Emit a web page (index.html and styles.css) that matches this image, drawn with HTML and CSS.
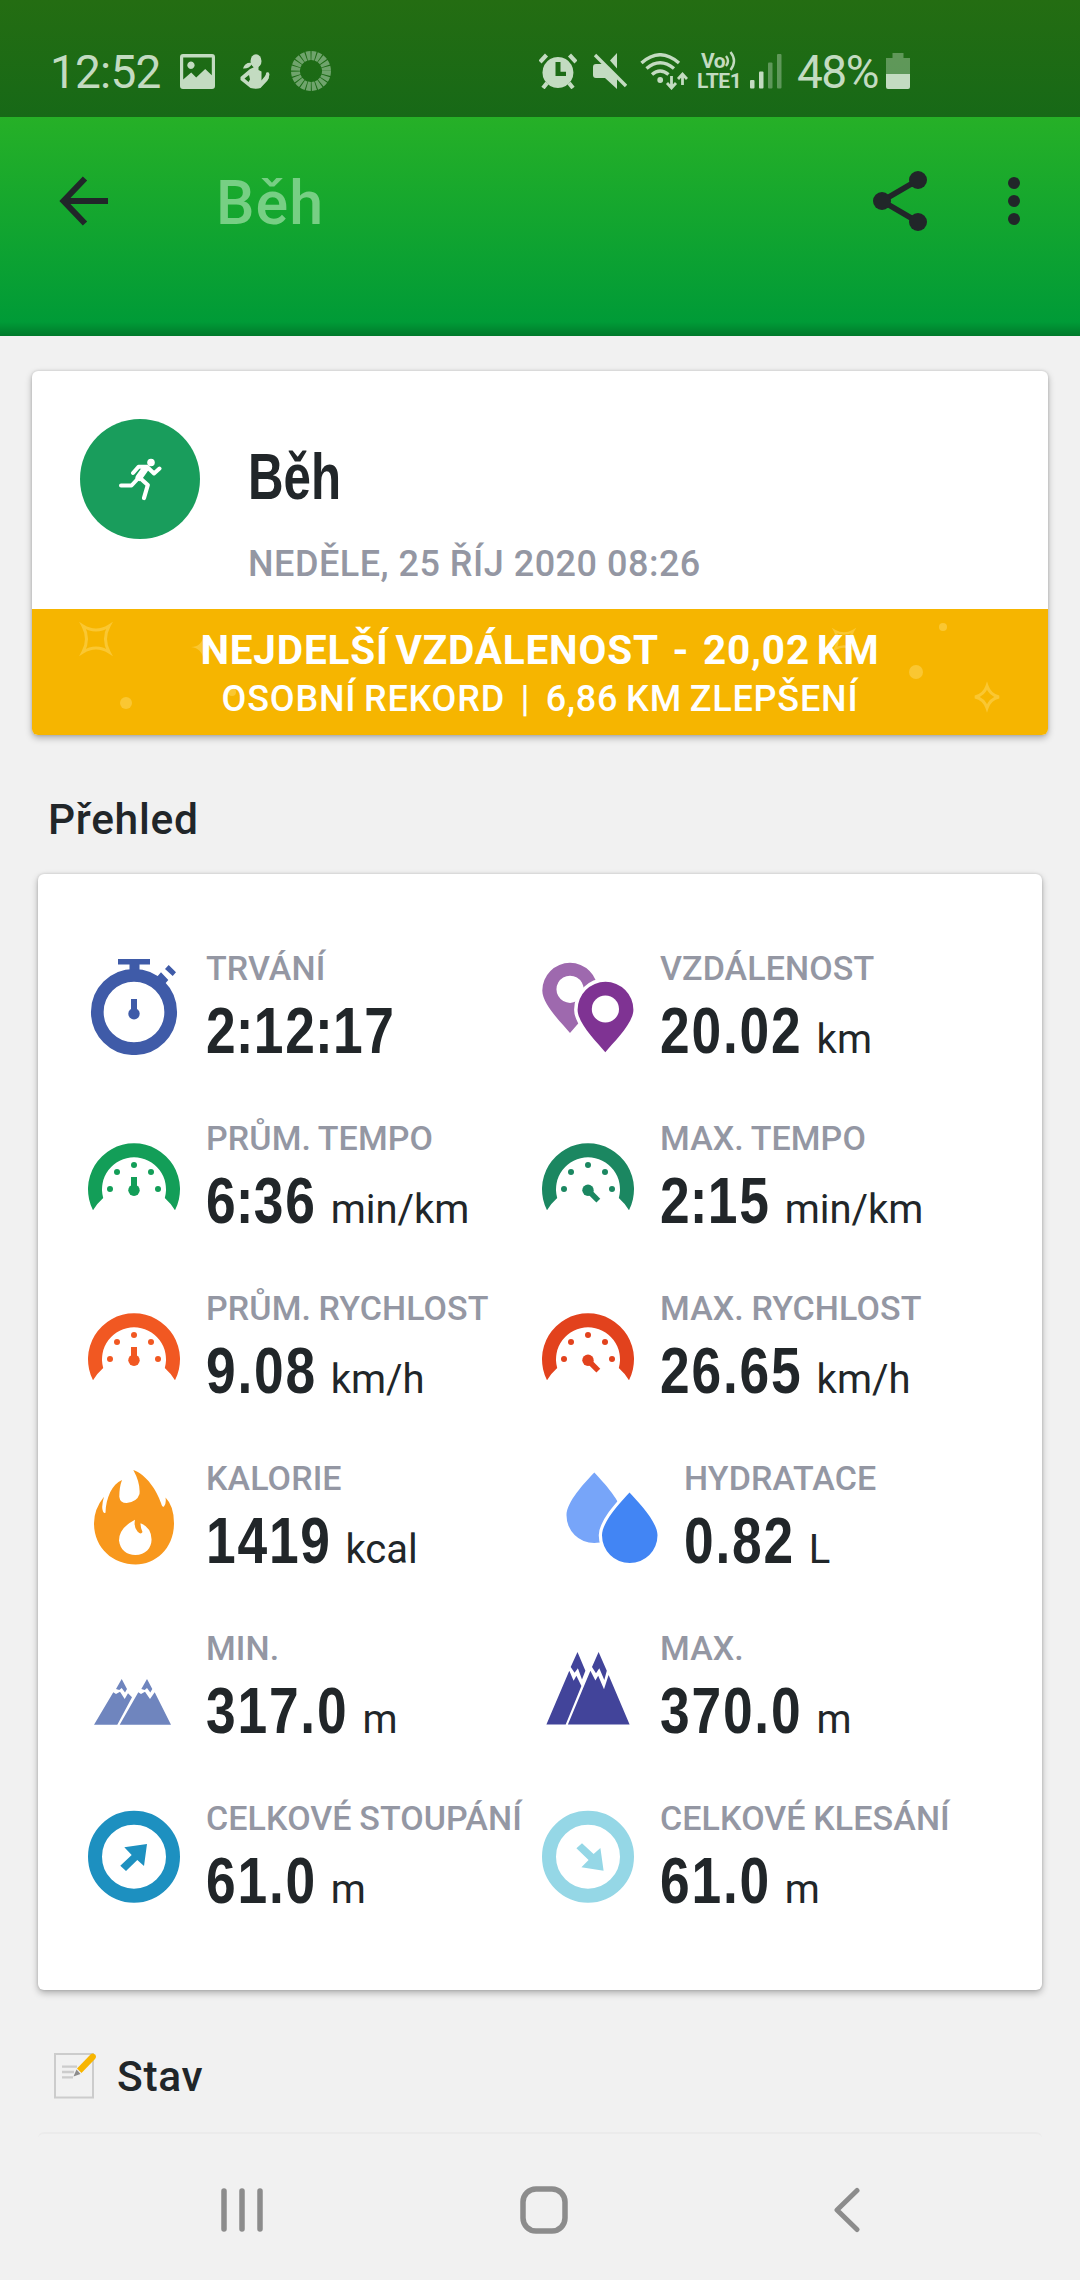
FILE: index.html
```html
<!DOCTYPE html>
<html lang="cs">
<head>
    <meta charset="UTF-8">
    <meta name="viewport" content="width=device-width, initial-scale=1.0">
    <title>Běh</title>
    <link rel="stylesheet" href="styles.css">
</head>
<body>

    <div class="status-bar">
        <span class="clock">12:52</span>
        <svg class="st-photo" width="35" height="35" viewBox="0 0 35 35"><path fill-rule="evenodd" d="M3 0h29a3 3 0 0 1 3 3v29a3 3 0 0 1-3 3H3a3 3 0 0 1-3-3V3a3 3 0 0 1 3-3zM3.200 3.500v22l8-7 5 5 9-8.500 6.600 6.300V3.500zM11 7.500a3.700 3.700 0 1 1-.1 0z"/></svg>
        <svg class="st-person" width="30" height="35" viewBox="0 0 30 35">
            <ellipse cx="16" cy="7" rx="5.500" ry="6.800"/>
            <path d="M12 9 Q5 8 3 14.500 Q9 15 12 10zM13.500 12h5v4l3 1.500v9l5.500-7 2.500 1-2 6-7 7.500q-4 1.500-10 0L.5 26v-3l9.500-8 3.500-1.500zM9 21l-4.500 3.500 4 3.500 1.500-2.500z" fill-rule="evenodd"/>
            <path d="M20 31l7-7 .6-4" fill="none" stroke="#c3dbc1" stroke-width="3.400" stroke-linecap="round"/>
        </svg>
        <svg class="st-ring" width="40" height="40" viewBox="0 0 40 40"><circle cx="20" cy="20" r="15.500" fill="none" stroke="#6fa46c" stroke-width="9" stroke-dasharray="3.970 .9"/></svg>
        <div class="status-right">
            <svg width="38" height="36" viewBox="0 0 38 36">
                <path fill-rule="evenodd" d="M19 4a15.500 15.500 0 1 1-.1 0zM16.500 9v14h10.500v-4.200h-5.500V9z"/>
                <path d="M1 9l6.500-7M37 9l-6.500-7M4 35l4-5M34 35l-4-5" fill="none" stroke="#c3dbc1" stroke-width="4.200"/>
            </svg>
            <svg class="st-mute" width="34" height="36" viewBox="0 0 34 36">
                <path d="M3 11h7l14 14v11L12 25H3q-3 0-3-3v-8q0-3 3-3zM24 0v15.500l-7-8z"/>
                <path d="M2 2l31 31" fill="none" stroke="#c3dbc1" stroke-width="3.400"/>
            </svg>
            <svg class="st-wifi" width="48" height="37" viewBox="0 0 48 37">
                <path d="M1.500 10Q20-6.500 39 10M6.500 15.500Q20 4 34 15.500M12 21.500Q20 14.500 28.500 21.500" fill="none" stroke="#c3dbc1" stroke-width="3.400"/>
                <circle cx="20.200" cy="27" r="2.900"/>
                <path d="M31.500 23v11M27 30l4.500 5 4.500-5M42.500 32V22M38 26l4.500-5 4.500 5" fill="none" stroke="#c3dbc1" stroke-width="2.800"/>
            </svg>
            <div class="volte"><span>Vo<svg width="11" height="20" viewBox="0 0 11 20"><path d="M1 5q4 5 0 10M5.500 1q7 9 0 18" fill="none" stroke="#c3dbc1" stroke-width="2.400"/></svg></span><span>LTE1</span></div>
            <svg class="st-signal" width="32" height="35" viewBox="0 0 32 35">
                <rect x="0" y="26" width="4.500" height="8.500" rx="1"/><rect x="9" y="17.500" width="4.500" height="17" rx="1"/>
                <g opacity=".4"><rect x="18" y="8.500" width="4.500" height="26" rx="1"/><rect x="27" y="0" width="4.500" height="34.500" rx="1"/></g>
            </svg>
            <span class="percent">48%</span>
            <svg class="st-battery" width="24" height="36" viewBox="0 0 24 36"><path opacity=".4" d="M6.500 0h11v5H24v16H0V5h6.500z"/><path d="M0 21h24v13q0 2-2 2H2q-2 0-2-2z"/></svg>
        </div>
    </div>

    <header class="app-bar">
        <svg class="back" width="50" height="50" viewBox="0 0 50 50"><path d="M26 2.500L4.500 25 26 47.500M4 25h45" fill="none" stroke="#212629" stroke-width="6"/></svg>
        <span class="app-title">Běh</span>
        <svg class="share" width="56" height="62" viewBox="0 0 56 62"><path d="M46 10L10 31l36 21" fill="none" stroke="#212629" stroke-width="5.500"/><circle cx="46" cy="10" r="9"/><circle cx="10" cy="31" r="9"/><circle cx="46" cy="52" r="9"/></svg>
        <svg class="more" width="12" height="50" viewBox="0 0 12 50"><circle cx="6" cy="7" r="6"/><circle cx="6" cy="25" r="6"/><circle cx="6" cy="43" r="6"/></svg>
    </header>

    <main>
        <section class="card summary">
            <div class="summary-top">
                <div class="sport">
                    <svg width="44" height="43" viewBox="0 0 44 43" fill="none" stroke="#fff" stroke-width="4" stroke-linecap="round" stroke-linejoin="round">
                        <circle cx="33" cy="4.500" r="3.800" fill="#fff" stroke="none"/>
                        <path d="M15 15L20.500 8.700H29L36 15.500 41.500 10.500"/>
                        <path d="M27 11L21 19.500" stroke-width="7"/>
                        <path d="M20.500 20L13.500 27.500H3"/>
                        <path d="M22 20L29.800 27 26 40" stroke-width="4.200"/>
                    </svg>
                </div>
                <div class="summary-text">
                    <h1>Běh</h1>
                    <div class="date">NEDĚLE, 25 ŘÍJ 2020 08:26</div>
                </div>
            </div>
            <div class="record">
                <svg class="confetti" width="1016" height="126" viewBox="0 0 1016 126">
                    <path d="M51 17q13 8 26 0q-7 13 0 26q-13-8-26 0q7-13 0-26z" fill="none" stroke="#fac732" stroke-width="3"/>
                    <path d="M159 38q11 0 13-13q2 13 13 13q-11 1-13 14q-2-13-13-14z"/>
                    <circle cx="94" cy="94" r="6"/><circle cx="200" cy="83" r="4"/>
                    <path d="M803 22q9 5 18 0q-5 9 0 18q-9-5-18 0q5-9 0-18z" fill="none" stroke="#fac732" stroke-width="2.500"/>
                    <circle cx="911" cy="18" r="4"/><circle cx="884" cy="63" r="7"/>
                    <path d="M943 88q9-2 12-11q3 9 12 11q-9 2-12 11q-3-9-12-11z" fill="none" stroke="#fac732" stroke-width="3"/>
                </svg>
                <div class="record-title">NEJDELŠÍ VZDÁLENOST&nbsp; -&nbsp; 20,02 KM</div>
                <div class="record-sub">OSOBNÍ REKORD&nbsp; |&nbsp; 6,86 KM ZLEPŠENÍ</div>
            </div>
        </section>

        <h2>Přehled</h2>

        <section class="card stats">
            <div class="stat">
                <svg class="icon" viewBox="0 0 96 96" fill="#3f5ba8">
                    <path d="M32 0h32v5.500H53.500V14h-10V5.500H32zM45 40h6v14h-6zM70 19l5-5.700 7.300 7.700L77 27zM79 10l3.700-4 7.300 7.300-3.300 3.700z"/>
                    <circle cx="48" cy="53" r="36.700" fill="none" stroke="#3f5ba8" stroke-width="12.700"/>
                    <circle cx="48" cy="54.700" r="5.700"/>
                </svg>
                <div class="stat-text"><div class="label">TRVÁNÍ</div><div class="value"><b>2<i>:</i>12<i>:</i>17</b></div></div>
            </div>
            <div class="stat">
                <svg class="icon" viewBox="0 0 96 96">
                    <path fill="#9e69ae" fill-rule="evenodd" d="M30 74C20.700 63 2.300 45 2.300 31.500A27.700 27.700 0 0 1 57.700 31.500C57.700 45 39.300 63 30 74zM30 16.700a13.600 13.600 0 1 0 .1 0z"/>
                    <path d="M65.300 93.200C56 82.200 37.600 64 37.600 50.700A27.700 27.700 0 0 1 93.400 50.700C93.400 64 74.600 82.200 65.300 93.200z" fill="#7f3393" stroke="#fff" stroke-width="7" paint-order="stroke"/>
                    <circle cx="65.400" cy="50" r="13.600" fill="#fff"/>
                </svg>
                <div class="stat-text"><div class="label">VZDÁLENOST</div><div class="value"><b>20.02</b><span>km</span></div></div>
            </div>
            <div class="stat">
                <svg class="icon" viewBox="0 0 96 96" fill="#139e58">
                    <path d="M7 81.200A46 46 0 1 1 89 81.200Q84.500 74 78.800 69A32 32 0 1 0 17.200 69Q11.500 74 7 81.200zM45 48h6v12h-6z"/>
                    <circle cx="48" cy="61.300" r="5.700"/><circle cx="24" cy="60" r="3"/><circle cx="31" cy="43" r="3"/><circle cx="48" cy="36" r="3"/><circle cx="65" cy="43" r="3"/><circle cx="72" cy="60" r="3"/>
                </svg>
                <div class="stat-text"><div class="label">PRŮM. TEMPO</div><div class="value"><b>6<i>:</i>36</b><span>min/km</span></div></div>
            </div>
            <div class="stat">
                <svg class="icon" viewBox="0 0 96 96" fill="#1b8761">
                    <path d="M7 81.200A46 46 0 1 1 89 81.200Q84.500 74 78.800 69A32 32 0 1 0 17.200 69Q11.500 74 7 81.200z"/>
                    <path d="M48 61.300l10.300 10.300" stroke="#1b8761" stroke-width="5.500"/>
                    <circle cx="48" cy="61.300" r="5.700"/><circle cx="24" cy="60" r="3"/><circle cx="31" cy="43" r="3"/><circle cx="48" cy="36" r="3"/><circle cx="65" cy="43" r="3"/><circle cx="72" cy="60" r="3"/>
                </svg>
                <div class="stat-text"><div class="label">MAX. TEMPO</div><div class="value"><b>2<i>:</i>15</b><span>min/km</span></div></div>
            </div>
            <div class="stat">
                <svg class="icon" viewBox="0 0 96 96" fill="#f15822">
                    <path d="M7 81.200A46 46 0 1 1 89 81.200Q84.500 74 78.800 69A32 32 0 1 0 17.200 69Q11.500 74 7 81.200zM45 48h6v12h-6z"/>
                    <circle cx="48" cy="61.300" r="5.700"/><circle cx="24" cy="60" r="3"/><circle cx="31" cy="43" r="3"/><circle cx="48" cy="36" r="3"/><circle cx="65" cy="43" r="3"/><circle cx="72" cy="60" r="3"/>
                </svg>
                <div class="stat-text"><div class="label">PRŮM. RYCHLOST</div><div class="value"><b>9.08</b><span>km/h</span></div></div>
            </div>
            <div class="stat">
                <svg class="icon" viewBox="0 0 96 96" fill="#e2421d">
                    <path d="M7 81.200A46 46 0 1 1 89 81.200Q84.500 74 78.800 69A32 32 0 1 0 17.200 69Q11.500 74 7 81.200z"/>
                    <path d="M48 61.300l10.300 10.300" stroke="#e2421d" stroke-width="5.500"/>
                    <circle cx="48" cy="61.300" r="5.700"/><circle cx="24" cy="60" r="3"/><circle cx="31" cy="43" r="3"/><circle cx="48" cy="36" r="3"/><circle cx="65" cy="43" r="3"/><circle cx="72" cy="60" r="3"/>
                </svg>
                <div class="stat-text"><div class="label">MAX. RYCHLOST</div><div class="value"><b>26.65</b><span>km/h</span></div></div>
            </div>
            <div class="stat">
                <svg class="icon" viewBox="0 0 96 96">
                    <path fill="#f8981d" d="M47.300 1C61 6 71 22 75 34q1.500 5 3 3.500q2.500-3 1.500-9Q88 37 88 54.300C88 80 69 95.500 49.700 95.500C27 95.500 8 79 8 54.300Q8 40 18 27.700Q15 38 17 42.500Q18.500 45 19.500 43.500C20 29 26 15 36 11Q33.300 18 33.300 27.700Q34 34 40.700 34Q51 33 53.500 25Q54.500 14 47.300 1z"/>
                    <path fill="#fff" d="M49 50.700Q33 59 33 71.500C34 81 41 86 49.300 86C60 86 66 78 65.500 70Q65 58 54.500 54.300Q54.500 59 56.500 63Q55 66 51.500 62.500Q47.500 58 49 50.700z"/>
                </svg>
                <div class="stat-text"><div class="label">KALORIE</div><div class="value"><b>1419</b><span>kcal</span></div></div>
            </div>
            <div class="stat shifted">
                <svg class="icon" viewBox="0 0 96 96">
                    <path fill="#77a5f9" d="M30.300 3.600C40 14 58 33 58 46.300A27.700 27.700 0 0 1 2.500 46.300C2.500 33 20.500 14 30.300 3.600z"/>
                    <path fill="#4285f4" stroke="#fff" stroke-width="6.500" paint-order="stroke" d="M65.500 23.600C75 34 93.500 53 93.500 66.300A27.700 27.700 0 0 1 38 66.300C38 53 56 34 65.500 23.600z"/>
                </svg>
                <div class="stat-text"><div class="label">HYDRATACE</div><div class="value"><b>0.82</b><span>L</span></div></div>
            </div>
            <div class="stat">
                <svg class="icon" viewBox="0 0 96 96" fill="#6f85be">
                    <path d="M8 85.700L27.300 53.300 30 55 34 52.700 38.700 60 42 54.300 46 58.300 31.300 85.700zM35.700 40L41 50 39 53.500 35.700 49 33.300 51 30 50z"/>
                    <path d="M33.700 85.700L52.300 53.300 55 55 59 52.700 64 60 68.700 53.300 85 85.700zM61 40L66.300 50 64.300 53.500 61 49 58.700 51 55.300 50z"/>
                </svg>
                <div class="stat-text"><div class="label">MIN.</div><div class="value"><b>317.0</b><span>m</span></div></div>
            </div>
            <div class="stat">
                <svg class="icon" viewBox="0 0 96 96" fill="#42449a">
                    <path d="M6.400 85.500L29.300 31.700 33.600 41.700 36.400 36.700 41.400 47 25.700 85.500zM37.500 13L45.400 31.700 42 40.500 37.900 29.300 34.600 33.700 30.700 28z"/>
                    <path d="M27.900 85.500L50.400 31.700 55.400 41.500 58.200 36.700 64 50.300 68.600 36 89.600 85.500zM58.600 13L66.800 31.700 64.300 41 59.300 29.300 56 34.300 52 28z"/>
                </svg>
                <div class="stat-text"><div class="label">MAX.</div><div class="value"><b>370.0</b><span>m</span></div></div>
            </div>
            <div class="stat">
                <svg class="icon" viewBox="0 0 96 96" fill="#1d90c0">
                    <circle cx="48" cy="47.700" r="39" fill="none" stroke="#1d90c0" stroke-width="14"/>
                    <path d="M61 35l-3 22-6.700-6L40 62l-5.700-5.300L45.700 46l-7.400-7.700z"/>
                </svg>
                <div class="stat-text"><div class="label">CELKOVÉ STOUPÁNÍ</div><div class="value"><b>61.0</b><span>m</span></div></div>
            </div>
            <div class="stat">
                <svg class="icon" viewBox="0 0 96 96" fill="#95d7e6">
                    <circle cx="48" cy="47.700" r="39" fill="none" stroke="#95d7e6" stroke-width="14"/>
                    <path d="M63.600 61.700L60.400 39l-6.800 6L42 34.300l-5.600 5L48.600 51l-7.200 7.300z"/>
                </svg>
                <div class="stat-text"><div class="label">CELKOVÉ KLESÁNÍ</div><div class="value"><b>61.0</b><span>m</span></div></div>
            </div>
        </section>

        <h2 class="status-heading">
            <svg width="44" height="48" viewBox="0 0 44 48">
                <rect x="2" y="2" width="38" height="43.500" fill="none" stroke="#ccc" stroke-width="2"/>
                <path d="M9 14.700h15M9 20h12M9 25.300h11" stroke="#ccc" stroke-width="2.300"/>
                <path d="M24 16.500L37.500 2.500q2-2 4.500 0q2 2 0 4.500L28.500 21z" fill="#f7b500"/>
                <path d="M23.500 17.500l4 4.500-7 2.500z" fill="#8c8c8c"/>
            </svg>
            Stav
        </h2>
        <div class="next-card"></div>
    </main>

    <nav class="nav-bar">
        <svg width="44" height="46" viewBox="0 0 44 46"><path d="M4 4v38M22 4v38M40 4v38" stroke-width="5.500"/></svg>
        <svg class="home" width="50" height="50" viewBox="0 0 50 50"><rect x="4" y="4" width="42" height="42" rx="13" stroke-width="5.500"/></svg>
        <svg width="28" height="46" viewBox="0 0 28 46"><path d="M24 3.500L4 23l20 19.500" stroke-width="5"/></svg>
    </nav>

</body>
</html>
```
FILE: styles.css
```css
* {
    box-sizing: border-box;
}

body {
    margin: 0;
    width: 1080px;
    height: 2280px;
    overflow: hidden;
    display: flex;
    flex-direction: column;
    background-color: #f1f1f1;
    color: #212629;
    font-family: Roboto, "Noto Sans", sans-serif;
}

svg {
    display: block;
    flex: none;
}

h1, h2 {
    margin: 0;
    font-weight: 500;
}

/* status bar */

.status-bar {
    height: 117px;
    padding: 25px 170px 0 50px;
    display: flex;
    align-items: center;
    background: linear-gradient(#246d12, #176917);
    color: #c3dbc1;
    fill: #c3dbc1;
    font-size: 46px;
}

.clock {
    width: 130px;
    padding-top: 2px;
    letter-spacing: -0.8px;
    line-height: 54px;
}

.st-person {
    margin-left: 25px;
}

.st-ring {
    margin-left: 21px;
}

.status-right {
    display: flex;
    align-items: center;
    margin-left: auto;
}

.st-mute {
    margin-left: 16px;
}

.st-wifi {
    margin-left: 13px;
}

.volte {
    width: 44px;
    margin-left: 9px;
    display: flex;
    flex-direction: column;
    font-size: 21px;
    font-weight: 700;
    line-height: 20px;
    letter-spacing: -0.4px;
}

.volte span {
    display: flex;
    padding-left: 4px;
}

.volte span + span {
    padding-left: 0;
}

.st-signal {
    margin-left: 9px;
}

.percent {
    width: 87px;
    margin-left: 15px;
    padding-top: 2px;
    line-height: 54px;
    letter-spacing: -1.5px;
}

.st-battery {
    margin-left: 2px;
}

/* app bar */

.app-bar {
    height: 219px;
    padding: 0 60px 51px 59px;
    display: flex;
    align-items: center;
    background: linear-gradient(transparent 205px, rgba(0, 60, 20, 0.35)), linear-gradient(#26b027, #009b37 205px);
    fill: #212629;
}

.app-title {
    margin-left: 107px;
    padding-top: 4px;
    font-size: 61px;
    font-weight: 500;
    line-height: 70px;
    letter-spacing: 1px;
    color: #77cf84;
}

.share {
    margin-left: auto;
}

.more {
    margin-left: 80px;
}

/* cards */

.card {
    background-color: #fff;
    border-radius: 6px;
    box-shadow: 0 3px 7px rgba(0, 0, 0, 0.28), 0 0 3px rgba(0, 0, 0, 0.15);
}

.summary {
    width: 1016px;
    height: 364px;
    margin: 35px auto 0;
    overflow: hidden;
}

.summary-top {
    height: 238px;
    padding: 48px 48px 0;
    display: flex;
}

.sport {
    width: 120px;
    height: 120px;
    border-radius: 50%;
    background-color: #199d5c;
    display: flex;
    align-items: center;
    justify-content: center;
}

.summary-text {
    padding: 23px 0 0 48px;
}

h1 {
    font-family: "Liberation Sans", Arial, sans-serif;
    font-size: 64px;
    font-weight: 700;
    line-height: 70px;
    transform: scaleX(0.77);
    transform-origin: left;
}

.date {
    margin-top: 30px;
    font-size: 36px;
    font-weight: 500;
    line-height: 44px;
    letter-spacing: 0.5px;
    color: #9497a3;
}

.record {
    position: relative;
    height: 126px;
    padding-top: 17px;
    background-color: #f6b500;
    color: #fff;
    text-align: center;
}

.confetti {
    position: absolute;
    top: 0;
    left: 0;
    fill: #fac732;
}

.record-title {
    position: relative;
    font-size: 40.5px;
    font-weight: 700;
    line-height: 48px;
    letter-spacing: 0.8px;
    word-spacing: -4px;
}

.record-sub {
    position: relative;
    margin-top: 3px;
    font-size: 36px;
    font-weight: 500;
    line-height: 44px;
    letter-spacing: 0.8px;
    word-spacing: -2px;
}

h2 {
    height: 139px;
    padding: 60px 0 0 48px;
    font-size: 42.5px;
    line-height: 50px;
    letter-spacing: 0.7px;
}

.stats {
    width: 1004px;
    height: 1116px;
    margin: 0 auto;
    padding: 48px;
    display: grid;
    grid-template-columns: 454px 454px;
    grid-auto-rows: 170px;
}

.stat {
    display: flex;
}

.shifted {
    padding-left: 24px;
}

.icon {
    width: 96px;
    height: 96px;
    margin-top: 37px;
}

.stat-text {
    padding: 26px 0 0 24px;
    white-space: nowrap;
}

.label {
    font-size: 34px;
    font-weight: 500;
    line-height: 40px;
    letter-spacing: 0.1px;
    word-spacing: -1px;
    color: #9497a3;
}

/* the whole line is condensed, the unit is stretched back */
.value {
    margin-top: 8px;
    display: flex;
    align-items: baseline;
    line-height: 70px;
    transform: scaleX(0.82);
    transform-origin: left;
}

.value b {
    font-family: "Liberation Sans", Arial, sans-serif;
    font-size: 65px;
    font-weight: 700;
    letter-spacing: 2.2px;
}

.value i {
    margin: 0 -2px;
    font-style: normal;
}

.value span {
    margin-left: 17px;
    font-size: 40px;
    transform: scaleX(1.22);
    transform-origin: left;
}

.status-heading {
    height: 142px;
    padding-top: 62px;
    padding-left: 53px;
    display: flex;
    gap: 20px;
}

.next-card {
    width: 1004px;
    height: 8px;
    margin: 0 auto;
    border-top: 2px solid #ebebeb;
    border-radius: 6px 6px 0 0;
}

/* system navigation */

.nav-bar {
    margin-top: auto;
    height: 140px;
    padding: 0 219px 0 220px;
    display: flex;
    align-items: center;
    justify-content: space-between;
    fill: none;
    stroke: #8c8c8c;
    stroke-linecap: round;
    stroke-linejoin: round;
}

.home {
    margin-right: 10px;
}
```
